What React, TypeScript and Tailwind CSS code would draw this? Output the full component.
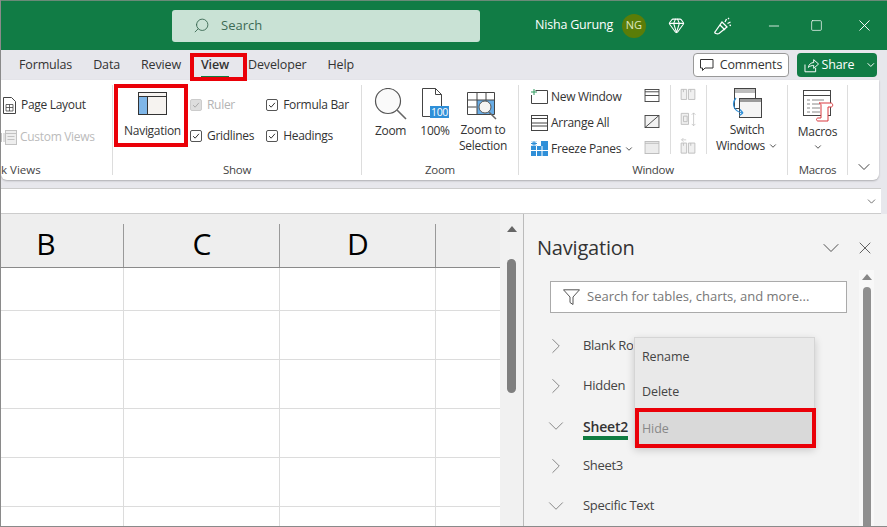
import { ChevronDown, ChevronRight, Gem, Minus, Search, Square, X } from 'lucide-react';

const GROUP_LABEL = 'absolute -bottom-[3px] left-0 right-0 text-center text-[11.5px] leading-4 text-[#444]';

function Check({ label, disabled }: { label: string; disabled?: boolean }) {
  return (
    <div className={`flex items-center gap-[5px] h-4 ${disabled ? 'text-[#b4b4b4]' : 'text-[#333]'}`}>
      <span className={`flex items-center justify-center w-3 h-3 rounded-[2px] border ${disabled ? 'border-[#ccc] bg-[#ddd]' : 'border-[#555] bg-white'}`}>
        <svg viewBox="0 0 12 12" className="w-[10px] h-[10px]" fill="none" stroke={disabled ? '#aaa' : '#333'} strokeWidth="1.2">
          <path d="M2.5 6.2 5 8.6 9.5 3.4" />
        </svg>
      </span>
      <span>{label}</span>
    </div>
  );
}

function NavigationIcon() {
  return (
    <svg width="29" height="23" viewBox="0 0 29 23">
      <rect x="0.5" y="0.5" width="28" height="22" fill="#f6f3f0" stroke="#333" />
      <rect x="1" y="5" width="8" height="17" fill="#7fb6e8" />
      <path d="M0 4.5h29M9.5 5v17" stroke="#333" fill="none" />
    </svg>
  );
}

function ZoomIcon() {
  return (
    <svg width="34" height="32" viewBox="0 0 34 32" fill="none">
      <circle cx="14" cy="13" r="12.5" fill="#fafafa" stroke="#555" strokeWidth="1.2" />
      <path d="M23 22 32 31" stroke="#666" strokeWidth="1.6" />
    </svg>
  );
}

function PercentIcon() {
  return (
    <svg width="28" height="31" viewBox="0 0 28 31" fill="none">
      <path d="M1.5.5h13l6 6v22h-19z" fill="#fff" stroke="#444" />
      <path d="M14.5.5v6h6" stroke="#444" />
      <rect x="9" y="18" width="19" height="12" fill="#2f8fd8" />
      <text x="18.5" y="28" textAnchor="middle" fontSize="10.5" fill="#fff" fontFamily="Open Sans, sans-serif">100</text>
    </svg>
  );
}

function ZoomSelectionIcon() {
  return (
    <svg width="32" height="29" viewBox="0 0 32 29" fill="none">
      <rect x="10" y="8" width="18" height="14" fill="#69ade6" />
      <path d="M.5.5h27v22H.5zM.5 8h27M.5 15h9M10 .5v22M19 .5v8" stroke="#444" />
      <circle cx="18" cy="15" r="6" fill="#f3f3f3" stroke="#555" />
      <path d="M22 20l7 7" stroke="#666" strokeWidth="1.5" />
    </svg>
  );
}

function PageLayoutIcon() {
  return (
    <svg width="13" height="17" viewBox="0 0 13 17" fill="none" stroke="#444">
      <path d="M.5.5h8l4 4v12H.5z" />
      <path d="M3 7.5h7v6.500H3zM3 10.500h7M6.500 7.500v6.500" strokeWidth="0.8" />
    </svg>
  );
}

function CustomViewsIcon() {
  return (
    <svg width="16" height="15" viewBox="0 0 16 15" fill="none" stroke="#c2c2c2">
      <rect x="4.500" y="0.500" width="11" height="14" fill="#eee" />
      <path d="M4.500 3.500h11M6.500 6.500h7M6.500 9.500h7M.5 3v9M3 3v9" />
    </svg>
  );
}

function NewWindowIcon() {
  return (
    <svg width="17" height="15" viewBox="0 0 17 15" fill="none">
      <path d="M4.500 1.500h12v13H.5V6" stroke="#444" />
      <path d="M3 0v6M0 3h6" stroke="#2f9a5f" />
    </svg>
  );
}

function ArrangeIcon() {
  return (
    <svg width="17" height="16" viewBox="0 0 17 16" fill="none" stroke="#444">
      <rect x="0.500" y="0.500" width="16" height="15" />
      <path d="M.5 3.500h16M.5 8h16M.5 11h16" />
    </svg>
  );
}

function FreezeIcon() {
  return (
    <svg width="17" height="15" viewBox="0 0 17 15">
      <rect x="0" y="5" width="17" height="10" fill="#2f8fd8" />
      <rect x="10" y="0" width="7" height="5" fill="#2f8fd8" />
      <path d="M3 0v5M0 2.500h6M1 .5l4 4M5 .5l-4 4" stroke="#2f8fd8" />
      <path d="M0 9.500h17M5.500 5v10M11 5v10" stroke="#fff" />
    </svg>
  );
}

function SplitIcon() {
  return (
    <svg width="16" height="14" viewBox="0 0 16 14" fill="none" stroke="#444">
      <rect x="0.500" y="0.500" width="15" height="13" />
      <path d="M.5 3h15M.5 7h15" />
    </svg>
  );
}

function HideIcon() {
  return (
    <svg width="16" height="14" viewBox="0 0 16 14" fill="none" stroke="#444">
      <rect x="0.500" y="0.500" width="15" height="13" fill="#f2f2f2" />
      <path d="M.5 13.500l15-13" />
    </svg>
  );
}

function UnhideIcon() {
  return (
    <svg width="16" height="14" viewBox="0 0 16 14" fill="#ececec" stroke="#bbb">
      <rect x="0.500" y="0.500" width="15" height="13" />
      <path d="M.5 2.500h15" />
    </svg>
  );
}

function SideBySideIcon({ top }: { top?: boolean }) {
  return (
    <svg width="16" height={top ? 18 : 14} viewBox={top ? '0 0 16 18' : '0 0 16 14'} fill="none" stroke="#bdbdbd">
      {top && <path d="M6 2H1l2-2M1 2l2 2" strokeWidth="0.8" />}
      <g transform={top ? 'translate(0 4)' : undefined}>
        <path d="M.5 1.500h6v11h-6zM8.500 1.500h7v11h-7z" fill="#f0f0f0" />
        <path d="M3 1.500v3M11 1.500v3" />
      </g>
    </svg>
  );
}

function SyncIcon() {
  return (
    <svg width="18" height="16" viewBox="0 0 18 16" fill="none" stroke="#bdbdbd">
      <path d="M.5 1.500h8v12h-8zM3 4.500h4v6H3z" fill="#f0f0f0" />
      <path d="M14 1v14M12 3l2-2 2 2M12 13l2 2 2-2" strokeWidth="0.8" />
    </svg>
  );
}

function SwitchIcon() {
  return (
    <svg width="31" height="31" viewBox="0 0 31 31" fill="none">
      <rect x="2.500" y="0.500" width="21" height="20" fill="#fff" stroke="#444" />
      <rect x="3" y="1" width="20" height="4" fill="#bdbdbd" />
      <rect x="7.500" y="10.500" width="22" height="19" fill="#f4f4f4" stroke="#444" />
      <path d="M8 11h21v3H8z" fill="#9a9a9a" />
      <path d="M4 10C-1 16 2 24 11 25M11 25l-3-3.500M11 25l-3.500 2.500" stroke="#2f8fd8" strokeWidth="1.2" />
    </svg>
  );
}

function MacrosIcon() {
  return (
    <svg width="31" height="32" viewBox="0 0 31 32" fill="none">
      <rect x="0.500" y="0.500" width="27" height="25" fill="#fff" stroke="#444" />
      <path d="M1 5.500h26" stroke="#444" />
      <path d="M4 10h3M9 10h12M4 14h3M9 14h8M4 18h3M9 18h8M4 22h3M9 22h8" stroke="#888" />
      <path d="M16 13h12c2 0 2.500 4 0 4h-3v14h-10c-2 0-2-3 0-3h3V15c0-1-1-2-2-2z" fill="#fff" stroke="#d9393e" />
    </svg>
  );
}

function BrushIcon() {
  return (
    <svg width="18" height="18" viewBox="0 0 18 18" fill="none" stroke="#fff" strokeWidth="1.300">
      <path d="M1 15 8 5l5 5-8 6.500c-2 1-5-.5-4-1.500z" />
      <path d="M6 8l5 5M11 5l1.500-3M13.500 6.500l3-1.500M15 1l-1 1M17 8.500l-1.500-.3" />
    </svg>
  );
}

function ShareIcon() {
  return (
    <svg width="16" height="16" viewBox="0 0 16 16" fill="none" stroke="#fff">
      <path d="M1 7.500v7.500h11v-4" />
      <path d="M4.500 10.500C5 7 7.500 5.500 10 5.500V2.500l5 4.500-5 4.500V8.500c-2 0-4 .5-5.500 2z" />
    </svg>
  );
}

function CommentIcon() {
  return (
    <svg width="14" height="14" viewBox="0 0 14 14" fill="none" stroke="#333">
      <path d="M.5 1.500h12.500v8.500H5l-2.500 2.500V10H.5z" />
    </svg>
  );
}

function Funnel() {
  return (
    <svg width="17" height="16" viewBox="0 0 17 16" fill="none" stroke="#555">
      <path d="M.5.800h16L10 8v7.500L7 13.500V8z" />
    </svg>
  );
}

function TreeRow({ label, open, active, clip }: { label: string; open?: boolean; active?: boolean; clip?: boolean }) {
  return (
    <div className="flex items-center h-10 text-[13px] text-[#444]">
      <div className="w-[33px] shrink-0 -ml-[7px] mr-[7px]">
        {open ? (
          <ChevronDown size={26} strokeWidth={0.8} className="text-[#777]" />
        ) : (
          <ChevronRight size={26} strokeWidth={0.8} className="text-[#777]" />
        )}
      </div>
      <span
        className={
          active
            ? 'font-semibold text-[14px] text-[#333] border-b-[4px] border-[#107c41] leading-[18px] mt-[5px] tracking-[-0.2px]'
            : `whitespace-nowrap tracking-[-0.3px] ${clip ? 'w-[50px] overflow-hidden' : ''}`
        }
      >
        {label}
      </span>
    </div>
  );
}

export default function App() {
  const rows = [0, 1, 2, 3, 4, 5];

  return (
    <div className="relative w-[887px] h-[527px] overflow-hidden flex flex-col bg-[#e7e7ec] font-['Open_Sans',sans-serif] text-[12px] text-[#333] border-l border-[#8a8a8a] border-b">
      {/* title bar */}
      <div className="h-[50px] shrink-0 flex items-center bg-[#117c45] text-white border-t border-[#6b8a78]">
        <div className="ml-[171px] w-[308px] h-8 rounded-[3px] bg-[#c9e2d5] flex items-center pl-[21px] gap-[11px] text-[#3d6b55] text-[13px]">
          <Search size={17} strokeWidth={1.300} className="-scale-x-100" />
          <span className="pt-[1px]">Search</span>
        </div>
        <span className="ml-[55px] text-[12.500px] tracking-[-0.2px] whitespace-nowrap">Nisha Gurung</span>
        <span className="ml-[9px] w-6 h-6 rounded-full bg-[#5a7d08] flex items-center justify-center text-[11px] text-[#dfe8c0]">NG</span>
        <Gem size={17} strokeWidth={1.500} className="ml-[22px]" />
        <div className="ml-[29px]"><BrushIcon /></div>
        <Minus size={16} strokeWidth={1.200} className="ml-[34px]" />
        <Square size={13} strokeWidth={1.300} className="ml-[28px]" />
        <X size={19} strokeWidth={1.200} className="ml-[32px]" />
      </div>

      {/* tabs */}
      <div className="h-[30px] shrink-0 flex items-center text-[12.500px] text-[#333] tracking-[-0.15px]">
        <div className="flex items-center gap-[21px] pl-[18px] pt-[1px]">
          <span>Formulas</span>
          <span>Data</span>
          <span>Review</span>
          <span className="relative font-semibold -ml-[1px]">
            View
            <span className="absolute left-0 right-0 -bottom-[3px] h-[2px] bg-[#107c41]" />
          </span>
          <span className="-ml-[2px]">Developer</span>
          <span>Help</span>
        </div>
        <div className="ml-auto flex items-center gap-2 pr-[10px]">
          <div className="w-[96px] h-6 flex items-center justify-center gap-[6px] bg-white rounded-[4px] border border-[#999]">
            <CommentIcon />
            <span className="pt-[1px]">Comments</span>
          </div>
          <div className="w-[80px] h-6 flex items-center pl-[7px] gap-[1px] bg-[#117c45] text-white rounded-[4px] text-[12.500px]">
            <ShareIcon />
            <span className="ml-[1px] pt-[1px]">Share</span>
            <ChevronDown size={12} strokeWidth={2} className="ml-[10px]" />
          </div>
        </div>
      </div>

      {/* ribbon */}
      <div className="h-[100px] shrink-0 mr-[8px] flex bg-white rounded-b-[6px] shadow-[0_1px_2px_rgba(0,0,0,0.25)] tracking-[-0.3px]">
        <div className="relative w-[112px] border-r border-[#ddd] my-[5px] pt-[12px] pl-[2px]">
          <div className="flex items-center gap-[5px] h-4">
            <PageLayoutIcon />
            <span className="whitespace-nowrap">Page Layout</span>
          </div>
          <div className="flex items-center gap-[3px] h-4 mt-[16px] -ml-[2px] text-[#bbb]">
            <CustomViewsIcon />
            <span className="whitespace-nowrap">Custom Views</span>
          </div>
          <span className="absolute -bottom-[3px] left-0 text-[11.500px] leading-4 text-[#444] tracking-normal">k Views</span>
        </div>

        <div className="relative w-[249px] border-r border-[#ddd] my-[5px] flex">
          <div className="w-[77px] flex flex-col items-center pt-[7px]">
            <div className="ml-[2px]"><NavigationIcon /></div>
            <span className="mt-[7px] ml-[2px]">Navigation</span>
          </div>
          <div className="flex flex-col gap-[15px] pt-[12px]">
            <Check label="Ruler" disabled />
            <Check label="Gridlines" />
          </div>
          <div className="flex flex-col gap-[15px] pt-[12px] ml-[12px]">
            <Check label="Formula Bar" />
            <Check label="Headings" />
          </div>
          <span className={GROUP_LABEL}>Show</span>
        </div>

        <div className="relative w-[157px] border-r border-[#ddd] my-[5px] flex pt-[3px] pl-[10px]">
          <div className="w-[37px] flex flex-col items-center">
            <ZoomIcon />
            <span className="mt-[2px]">Zoom</span>
          </div>
          <div className="w-[38px] ml-[7px] flex flex-col items-center">
            <div className="h-[32px]"><PercentIcon /></div>
            <span className="mt-[2px]">100%</span>
          </div>
          <div className="ml-[5px] flex flex-col items-center">
            <div className="h-[32px] pt-[4px]"><ZoomSelectionIcon /></div>
            <span className="mt-[2px] leading-4 text-center">Zoom to<br />Selection</span>
          </div>
          <span className={GROUP_LABEL}>Zoom</span>
        </div>

        <div className="relative w-[269px] border-r border-[#ddd] my-[5px] flex">
          <div className="w-[125px] pl-[12px] pt-[4px] flex flex-col gap-[11px]">
            <div className="flex items-center h-[15px] gap-[3px] whitespace-nowrap"><NewWindowIcon />New Window</div>
            <div className="flex items-center h-[15px] gap-[3px] whitespace-nowrap"><ArrangeIcon />Arrange All</div>
            <div className="flex items-center h-[15px] gap-[3px] whitespace-nowrap">
              <FreezeIcon />Freeze Panes
              <ChevronDown size={10} strokeWidth={2} />
            </div>
          </div>
          <div className="w-[27px] h-[69px] pt-[4px] flex flex-col gap-[13px] border-r border-[#ddd]">
            <SplitIcon />
            <HideIcon />
            <UnhideIcon />
          </div>
          <div className="w-[36px] h-[69px] pl-[9px] pt-[3px] flex flex-col gap-[11px] border-r border-[#ddd]">
            <SideBySideIcon />
            <SyncIcon />
            <SideBySideIcon top />
          </div>
          <div className="flex-1 flex flex-col items-center pt-[3px] leading-4">
            <SwitchIcon />
            <span className="mt-[3px]">Switch</span>
            <span className="flex items-center gap-[3px]">Windows<ChevronDown size={10} strokeWidth={2} /></span>
          </div>
          <span className={GROUP_LABEL}>Window</span>
        </div>

        <div className="relative w-[60px] border-r border-[#ddd] my-[5px] flex flex-col items-center pt-[5px]">
          <div className="ml-[2px]"><MacrosIcon /></div>
          <span className="mt-[2px] leading-4">Macros</span>
          <ChevronDown size={10} strokeWidth={2} className="mt-[2px]" />
          <span className={GROUP_LABEL}>Macros</span>
        </div>

        <div className="flex-1 flex items-end justify-center pb-[3px] pl-[1px]">
          <ChevronDown size={20} strokeWidth={1.200} className="text-[#444]" />
        </div>
      </div>

      {/* formula bar */}
      <div className="mt-2 h-[26px] shrink-0 mr-[6px] bg-white border-y border-[#ccc] flex items-center justify-end pr-[3px]">
        <ChevronDown size={13} strokeWidth={1.500} className="text-[#555]" />
      </div>

      {/* sheet + pane */}
      <div className="flex-1 min-h-0 flex">
        <div className="w-[499px] shrink-0 bg-white overflow-hidden">
          <div className="h-[54px] pt-[6px] grid grid-cols-[123px_156px_156px_64px] bg-[#eeeeee] border-b border-[#8a8a8a] text-[30px] leading-none text-black">
            <div className="relative flex items-center justify-center pr-[33px]">B<span className="absolute right-0 bottom-0 h-[43px] w-px bg-[#999]" /></div>
            <div className="relative flex items-center justify-center">C<span className="absolute right-0 bottom-0 h-[43px] w-px bg-[#999]" /></div>
            <div className="relative flex items-center justify-center">D<span className="absolute right-0 bottom-0 h-[43px] w-px bg-[#999]" /></div>
            <div />
          </div>
          {rows.map((r) => (
            <div key={r} className={`grid grid-cols-[123px_156px_156px_64px] ${r === 0 ? 'h-[43px]' : 'h-[49px]'} border-b border-[#dcdcdc]`}>
              <div className="border-r border-[#dcdcdc]" />
              <div className="border-r border-[#dcdcdc]" />
              <div className="border-r border-[#dcdcdc]" />
              <div />
            </div>
          ))}
        </div>

        {/* sheet scrollbar */}
        <div className="w-[24px] shrink-0 bg-[#f1f1f1] border-r border-[#bbb] flex flex-col items-center pt-[12px]">
          <div className="w-0 h-0 border-x-[5px] border-x-transparent border-b-[6px] border-b-[#666]" />
          <div className="mt-[27px] w-[9px] h-[134px] rounded-full bg-[#7f7f7f]" />
        </div>

        {/* navigation pane */}
        <div className="relative flex-1 min-w-0 bg-[#f3f3f3]">
          <div className="flex items-center h-[67px] pl-[13px] pr-[12px]">
            <span className="text-[20px] text-[#333] tracking-[-0.2px]">Navigation</span>
            <ChevronDown size={28} strokeWidth={0.800} className="ml-auto text-[#444]" />
            <X size={20} strokeWidth={1} className="ml-[10px] text-[#444]" />
          </div>
        </div>
      </div>

      {/* pane content sits over the pane column */}
      <div className="absolute left-[523px] top-[267px] w-[363px] bottom-0">
        <div className="absolute left-[26px] top-[14px] w-[297px] h-[32px] bg-white border border-[#aaa] flex items-center pl-[12px] gap-[7px] text-[13px] text-[#777]">
          <Funnel />
          <span className="whitespace-nowrap">Search for tables, charts, and more...</span>
        </div>
        <div className="absolute left-[26px] top-[59px] w-[260px]">
          <TreeRow label="Blank Rows" clip />
          <TreeRow label="Hidden" />
          <TreeRow label="Sheet2" open active />
          <TreeRow label="Sheet3" />
          <TreeRow label="Specific Text" open />
        </div>
        <div className="absolute left-[335px] top-[3px] w-[15px] bottom-0 bg-[#f8f8f8] flex flex-col items-center pt-[4px]">
          <div className="w-0 h-0 border-x-[5px] border-x-transparent border-b-[6px] border-b-[#888]" />
          <div className="mt-[7px] w-2 flex-1 rounded-t-full bg-[#8f8f8f]" />
        </div>
      </div>

      {/* context menu */}
      <div className="absolute left-[633px] top-[337px] w-[181px] h-[110px] bg-[#e9e9e9] border border-[#d5d5d5] shadow-[0_3px_8px_rgba(0,0,0,0.18)] text-[12.500px] text-[#444] tracking-[-0.1px]">
        <div className="h-9 flex items-center pl-[7px] pt-[2px]">Rename</div>
        <div className="h-9 flex items-center pl-[7px] pt-[1px]">Delete</div>
        <div className="h-[37px] flex items-center pl-[7px] pt-[1px] bg-[#d9d9d9] text-[#888]">Hide</div>
      </div>

      {/* red callouts from the screenshot */}
      <div className="absolute left-[189px] top-[53px] w-[57px] h-[28px] border-[4px] border-[#ea0008]" />
      <div className="absolute left-[113px] top-[84px] w-[74px] h-[63px] border-[4px] border-[#ea0008]" />
      <div className="absolute left-[634px] top-[408px] w-[181px] h-[40px] border-[4px] border-[#ea0008]" />
    </div>
  );
}
